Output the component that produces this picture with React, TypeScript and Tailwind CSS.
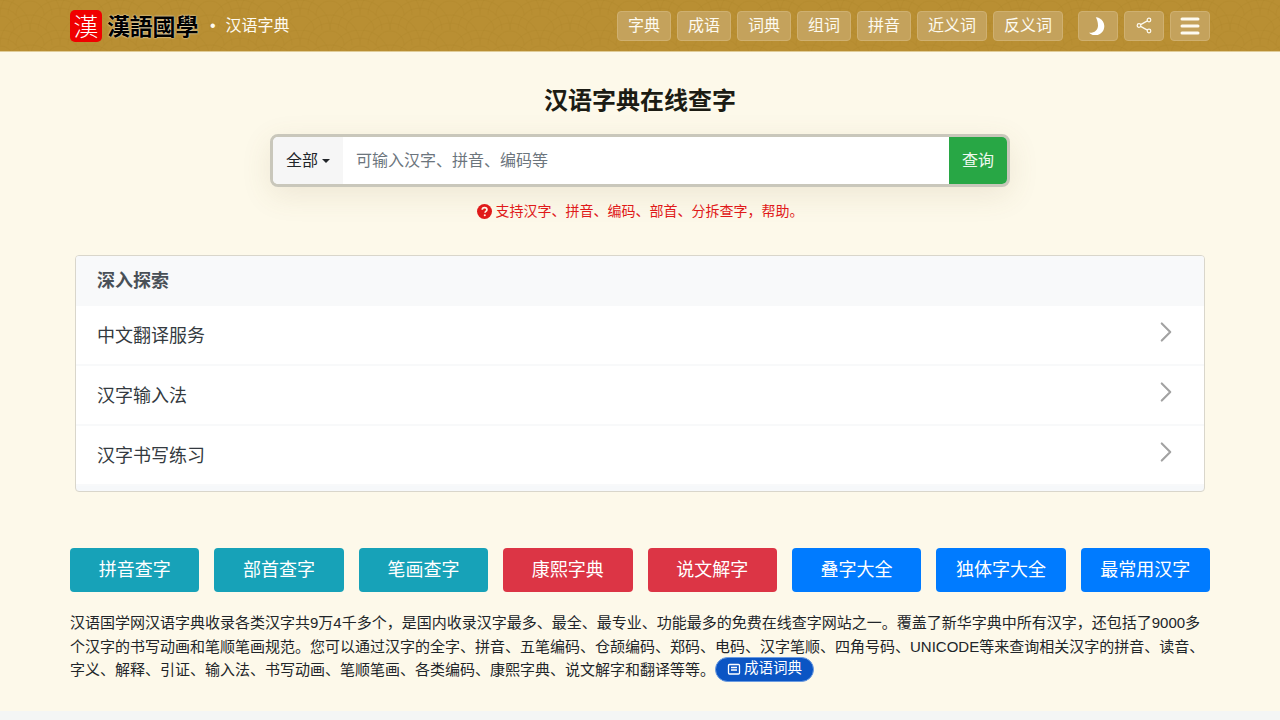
import React from "react";
import { ChevronRight, Menu } from "lucide-react";

const nav = ["字典", "成语", "词典", "组词", "拼音", "近义词", "反义词"];
const links = ["中文翻译服务", "汉字输入法", "汉字书写练习"];
const btns: [string, string][] = [
  ["拼音查字", "bg-[#17a2b8]"],
  ["部首查字", "bg-[#17a2b8]"],
  ["笔画查字", "bg-[#17a2b8]"],
  ["康熙字典", "bg-[#dc3545]"],
  ["说文解字", "bg-[#dc3545]"],
  ["叠字大全", "bg-[#007bff]"],
  ["独体字大全", "bg-[#007bff]"],
  ["最常用汉字", "bg-[#007bff]"],
];
const navBtn =
  "h-[30px] flex items-center justify-center rounded-[4px] border border-[#cfb070] bg-[#c4a25c] text-[#fdfaf0] text-base";

function Scale({ x, y }: { x: number; y: number }) {
  return (
    <g fill="none" stroke="#a07a22" strokeOpacity=".13" strokeWidth="1.500">
      {[30, 22, 14].map((r) => (
        <path key={r} d={`M${x - r} ${y}a${r} ${r} 0 0 1 ${2 * r} 0`} />
      ))}
    </g>
  );
}

function Waves() {
  return (
    <svg className="absolute inset-0 w-full h-full pointer-events-none" aria-hidden="true">
      <defs>
        <pattern id="w" width="60" height="30" patternUnits="userSpaceOnUse">
          <Scale x={30} y={15} />
          <Scale x={0} y={30} />
          <Scale x={60} y={30} />
          <Scale x={30} y={45} />
        </pattern>
      </defs>
      <rect width="100%" height="100%" fill="url(#w)" />
    </svg>
  );
}

export default function App() {
  return (
    <div className="h-[720px] overflow-hidden bg-[#f4f6f5] text-[#212529] font-['Liberation_Sans','Noto_Sans_CJK_SC',sans-serif]">
      <header className="relative h-[52px] bg-[#b98f33] border-b border-[#e0cc98]">
        <Waves />
        <div className="relative w-[1140px] mx-auto h-[51px] flex items-center">
          <div className="w-8 h-8 rounded-[5px] bg-[#f00000] flex items-center justify-center text-white text-[25px] leading-none font-['Noto_Sans_CJK_TC',sans-serif] font-light">漢</div>
          <div className="ml-[5px] w-[93px] text-[23px] leading-none whitespace-nowrap tracking-[-0.2px] font-bold text-black font-['Noto_Sans_CJK_TC',sans-serif] [text-shadow:0_0_2px_#fff]">漢語國學</div>
          <span className="ml-[10px] text-[#fdfaf0] text-base">•</span>
          <span className="ml-[10px] text-[#fdfaf0] text-base">汉语字典</span>
          <nav className="ml-auto flex gap-[6px]">
            {nav.map((n) => (
              <div key={n} className={`${navBtn} ${n.length === 3 ? "w-[70px]" : "w-[54px]"}`}>{n}</div>
            ))}
            <div className={`${navBtn} w-[40px] ml-[9px]`}>
              <svg width="18" height="18" viewBox="0 0 16 16"><path fill="#fff" d="M6 0.300a8 8 0 1 1-6 13.700c4.500.5 8-2.500 8-6.500 0-3-1-5.500-2-7.200z" /></svg>
            </div>
            <div className={`${navBtn} w-[40px]`}>
              <svg width="16" height="17" viewBox="0 0 16 17" fill="none" stroke="#fdfaf0" strokeWidth="1.200">
                <circle cx="13" cy="3" r="1.800" />
                <circle cx="3" cy="8.500" r="1.800" />
                <circle cx="13" cy="14" r="1.800" />
                <path d="M4.600 7.600l6.800-3.700M4.600 9.400l6.800 3.700" />
              </svg>
            </div>
            <div className={`${navBtn} w-[40px]`}><Menu size={24} strokeWidth={3} /></div>
          </nav>
        </div>
      </header>

      <main className="h-[659px] bg-[#fdf9ea]">
        <div className="w-[1140px] mx-auto">
          <h1 className="pt-[31px] text-center text-[24px] leading-[36px] font-bold text-[#1c1c14]">汉语字典在线查字</h1>
          <div className="mt-[15px] mx-auto w-[740px] h-[53px] flex rounded-[8px] border-[3px] border-[#c9c7bb] bg-white overflow-hidden shadow-[0_8px_30px_rgba(120,100,60,0.12)]">
            <div className="w-[70px] bg-[#f6f6f6] flex items-center justify-center text-base text-[#212529]">
              全部<span className="ml-1 border-x-[4px] border-x-transparent border-t-[4px] border-t-[#212529]" />
            </div>
            <div className="flex-1 flex items-center pl-[13px] text-base text-[#6c757d]">可输入汉字、拼音、编码等</div>
            <div className="w-[58px] bg-[#28a745] flex items-center justify-center text-base text-[#eef8ef]">查询</div>
          </div>
          <p className="mt-[14px] flex items-center justify-center text-sm leading-[21px] text-[#e01a1a]">
            <svg width="15" height="15" viewBox="0 0 16 16" className="mr-1"><circle cx="8" cy="8" r="8" fill="#e01a1a" /><path d="M5.600 6.200c0-1.400 1-2.400 2.500-2.400s2.500.9 2.500 2.200c0 1.900-2 1.800-2 3.200" fill="none" stroke="#fdf9ea" strokeWidth="1.800" /><circle cx="8.300" cy="12" r="1.100" fill="#fdf9ea" /></svg>
            支持汉字、拼音、编码、部首、分拆查字，帮助。
          </p>

          <section className="mt-[33px] mx-[5px] h-[237px] rounded-[4px] border border-[#d9d6cb] bg-[#f6f8fa] overflow-hidden">
            <div className="h-[50px] bg-[#f8f9fa] flex items-center pl-[21px] text-lg font-bold text-[#495057]">深入探索</div>
            {links.map((l) => (
              <div key={l} className="h-[60px] bg-white flex items-center justify-between pl-[21px] pr-[21px] border-b-2 border-[#f8f9fa] text-lg text-[#343a40]">
                <span className="pt-[2px]">{l}</span>
                <ChevronRight size={34} strokeWidth={1.500} className="text-[#a3a3a3] -mt-[6px]" />
              </div>
            ))}
          </section>

          <div className="mt-[56px] grid grid-cols-8 gap-[15px]">
            {btns.map(([t, c]) => (
              <div key={t} className={`${c} h-[44px] rounded-[4px] flex items-center justify-center text-lg text-white`}>{t}</div>
            ))}
          </div>

          <p className="mt-[19px] text-[15px] leading-[23.5px] text-[#212529]">
            汉语国学网汉语字典收录各类汉字共9万4千多个，是国内收录汉字最多、最全、最专业、功能最多的免费在线查字网站之一。覆盖了新华字典中所有汉字，还包括了9000多个汉字的书写动画和笔顺笔画规范。您可以通过汉字的全字、拼音、五笔编码、仓颉编码、郑码、电码、汉字笔顺、四角号码、UNICODE等来查询相关汉字的拼音、读音、字义、解释、引证、输入法、书写动画、笔顺笔画、各类编码、康熙字典、说文解字和翻译等等。
            <span className="relative -top-[2px] inline-flex items-center h-[25px] -my-[5px] px-[11px] rounded-full bg-[#0b55c4] border border-[#6b9be0] text-white text-[14.5px] align-middle whitespace-nowrap">
              <svg width="14" height="14" viewBox="0 0 14 14" className="mr-[3px]" fill="none" stroke="#fff" strokeWidth="1.300"><rect x="1.500" y="2.500" width="11" height="9.500" rx="1" /><path d="M4 5.500h6M4 8h6" /></svg>
              成语词典
            </span>
          </p>
        </div>
      </main>
    </div>
  );
}
